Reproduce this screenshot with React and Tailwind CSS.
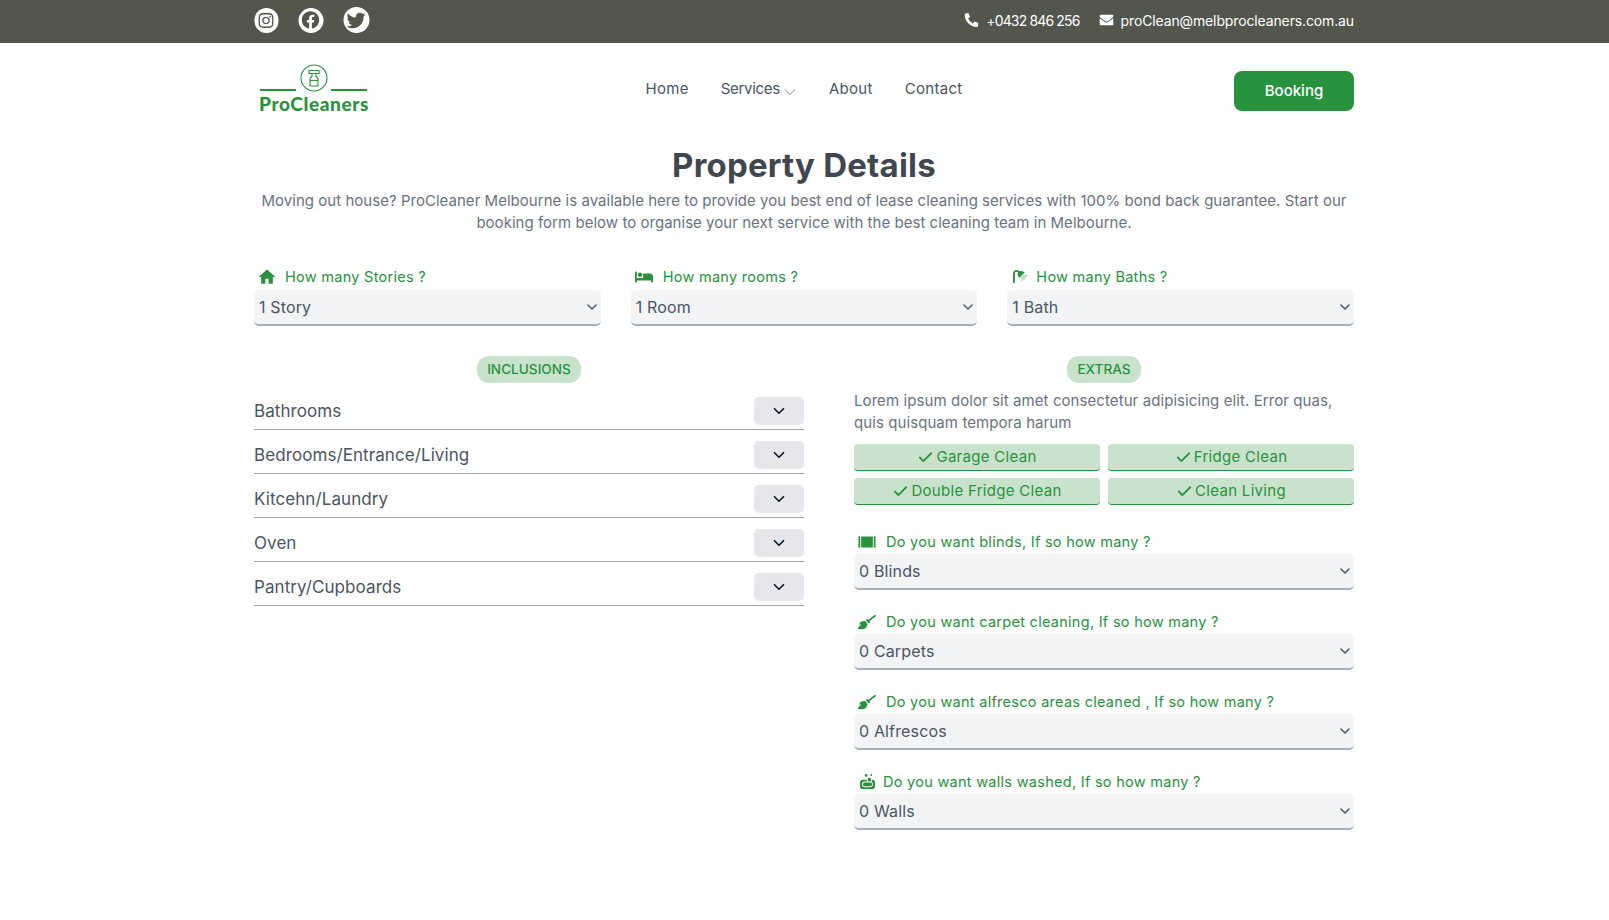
import { Check, ChevronDown } from 'lucide-react';
import {
  FaBed,
  FaBroom,
  FaEnvelope,
  FaFacebook,
  FaInstagram,
  FaPhoneAlt,
  FaShower,
  FaSoap,
  FaTwitter,
} from 'react-icons/fa';
import { FaRug } from 'react-icons/fa6';
import { MdHome } from 'react-icons/md';

const font = "font-['Inter','Noto_Sans',sans-serif]";

const propertyFields = [
  { Icon: MdHome, label: 'How many Stories ?', value: '1 Story', iconClass: 'w-[20px] h-[20px]', gap: 'gap-[10px]', selectGap: 'mt-[4px]' },
  { Icon: FaBed, label: 'How many rooms ?', value: '1 Room', iconClass: 'w-[18px] h-[18px]', gap: 'gap-[11px]', selectGap: 'mt-[4px]' },
  { Icon: FaShower, label: 'How many Baths ?', value: '1 Bath', iconClass: 'w-[15px] h-[15px]', gap: 'gap-[8px]', selectGap: 'mt-[4px]' },
];

const inclusions = ['Bathrooms', 'Bedrooms/Entrance/Living', 'Kitcehn/Laundry', 'Oven', 'Pantry/Cupboards'];

const chips = ['Garage Clean', 'Fridge Clean', 'Double Fridge Clean', 'Clean Living'];

const extraFields = [
  { Icon: FaRug, label: 'Do you want blinds, If so how many ?', value: '0 Blinds', iconClass: 'w-[18px] h-[18px]', gap: 'gap-[11px]' },
  { Icon: FaBroom, label: 'Do you want carpet cleaning, If so how many ?', value: '0 Carpets', iconClass: 'w-[18px] h-[18px]', gap: 'gap-[11px]' },
  { Icon: FaBroom, label: 'Do you want alfresco areas cleaned , If so how many ?', value: '0 Alfrescos', iconClass: 'w-[18px] h-[18px]', gap: 'gap-[11px]' },
  { Icon: FaSoap, label: 'Do you want walls washed, If so how many ?', value: '0 Walls', iconClass: 'w-[15px] h-[15px]', gap: 'gap-[8px]' },
];

function SelectField({ Icon, label, value, iconClass, gap, selectGap = 'mt-[3px]' }) {
  return (
    <div>
      <label className={`flex h-[19px] items-center pl-[5px] ${gap} text-[14.5px] leading-[19px] tracking-[0.28px] text-[#28923e]`}>
        <span className="flex w-[16px] justify-center">
          <Icon className={`shrink-0 ${iconClass}`} />
        </span>
        {label}
      </label>
      <div className={`relative ${selectGap}`}>
        <select
          defaultValue={value}
          className="h-[36px] w-full appearance-none rounded-[5px] border-b-2 border-[#a8aeb6] bg-[#f3f4f6] pl-[5px] text-[16px] tracking-[0.15px] text-[#4b5563] outline-none"
        >
          <option>{value}</option>
        </select>
        <ChevronDown strokeWidth={2.25} className="pointer-events-none absolute right-[1px] top-[9px] h-[16px] w-[16px] text-[#4b5563]" />
      </div>
    </div>
  );
}

export default function App() {
  return (
    <div className={`min-h-[920px] bg-white pr-[1px] ${font}`}>
      {/* Top bar */}
      <div className="-mr-[1px] h-[43px] bg-[#52564d]">
        <div className="mx-auto flex h-full w-[1100px] -translate-x-[0.5px] items-center justify-between">
          <div className="flex items-center gap-[20px] pb-[3px]">
            <span className="flex h-[25px] w-[24px] items-center justify-center rounded-full bg-white text-[#52564d]">
              <FaInstagram className="h-[17px] w-[17px]" />
            </span>
            <span className="flex h-[25px] w-[25px] items-center justify-center rounded-full bg-white text-[#52564d]">
              <FaFacebook className="h-[18px] w-[18px]" />
            </span>
            <span className="flex h-[26px] w-[26px] items-center justify-center rounded-full bg-white text-[#52564d]">
              <FaTwitter className="h-[19px] w-[19px]" />
            </span>
          </div>
          <div className="flex items-center pb-[3px] text-[14px] text-white">
            <FaPhoneAlt className="h-[14px] w-[14px]" />
            <span className="ml-[8px] tracking-[-0.85px]">+0432 846 256</span>
            <FaEnvelope className="ml-[20px] h-[14px] w-[14px]" />
            <span className="ml-[7px] tracking-[-0.13px]">proClean@melbprocleaners.com.au</span>
          </div>
        </div>
      </div>

      <div className="mx-auto w-[1100px]">
        {/* Nav */}
        <nav className="flex h-[96px] items-center justify-between">
          <div className="mb-[5px] ml-[6px] w-[107px]">
            <div className="flex items-end justify-between">
              <span className="mb-[1px] h-[2px] w-[36px] bg-[#28923e]" />
              <svg viewBox="0 0 28 28" className="h-[28px] w-[28px]" fill="none" stroke="#28923e" strokeWidth="1.1">
                <circle cx="14" cy="14" r="13" />
                <path d="M9 6.5h10v3h-10zM12 9.5v3l-2 2v7.5h8v-7.5l-2-2v-3M10 16.5h8" />
              </svg>
              <span className="mb-[1px] h-[2px] w-[36px] bg-[#28923e]" />
            </div>
            <div className="-ml-[1px] mt-[2px] whitespace-nowrap font-['Lato'] text-[19px] font-black leading-[20px] tracking-[0.6px] text-[#28923e]">ProCleaners</div>
          </div>
          <div className="mb-[4px] ml-[7px] flex items-center gap-[32px] text-[15px] tracking-[0.3px] text-[#4b5563]">
            <a>Home</a>
            <a className="flex items-center tracking-[-0.3px]">
              Services
              <ChevronDown strokeWidth={1.25} className="-my-[4px] -mr-[3px] mt-[2px] h-[20px] w-[20px] text-[#9ca3af]" />
            </a>
            <a>About</a>
            <a>Contact</a>
          </div>
          <button className="h-[40px] w-[120px] rounded-[8px] bg-[#28923e] text-[15px] font-medium text-white">Booking</button>
        </nav>

        {/* Heading */}
        <h1 className="mt-[4px] text-center text-[33px] font-bold leading-[44px] tracking-[0.2px] text-[#414750]">Property Details</h1>
        <p className="mt-[3px] whitespace-nowrap text-center text-[15px] leading-[22px] tracking-[0.03px] text-[#6b7280]">
          Moving out house? ProCleaner Melbourne is available here to provide you best end of lease cleaning services with 100% bond back guarantee. Start our
          <br />
          booking form below to organise your next service with the best cleaning team in Melbourne.
        </p>

        {/* Property selects */}
        <div className="mt-[33px] grid grid-cols-3 gap-[30px]">
          {propertyFields.map((field) => (
            <SelectField key={field.label} {...field} />
          ))}
        </div>

        <div className="mt-[30px] grid grid-cols-[550px_500px] gap-[50px]">
          {/* Inclusions */}
          <div>
            <div className="flex justify-center">
              <span className="flex h-[27px] items-center rounded-[12px] bg-[#c8e2cc] px-[10px] text-[13.6px] font-medium text-[#28923e]">INCLUSIONS</span>
            </div>
            <div className="mt-[3px]">
              {inclusions.map((item) => (
                <div key={item} className="flex h-[44px] items-center justify-between border-b border-[#a3a3a3] pb-[4px] pt-[11px] text-[17px] tracking-[0.08px] text-[#4b5563]">
                  <span className="mt-[1px]">{item}</span>
                  <button className="flex h-[28px] w-[50px] items-center justify-center rounded-[5px] bg-[#e7e7eb] text-[#111827]">
                    <ChevronDown strokeWidth={2.25} className="h-[18px] w-[18px]" />
                  </button>
                </div>
              ))}
            </div>
          </div>

          {/* Extras */}
          <div>
            <div className="flex justify-center">
              <span className="flex h-[27px] items-center rounded-[12px] bg-[#c8e2cc] px-[10px] text-[13.6px] font-medium text-[#28923e]">EXTRAS</span>
            </div>
            <p className="mt-[7px] whitespace-nowrap text-[15px] leading-[22px] tracking-[0.08px] text-[#6b7280]">
              Lorem ipsum dolor sit amet consectetur adipisicing elit. Error quas,
              <br />
              quis quisquam tempora harum
            </p>
            <div className="mt-[10px] grid grid-cols-2 gap-x-[8px] gap-y-[7px]">
              {chips.map((chip) => (
                <div key={chip} className="flex h-[27px] items-center justify-center gap-[2px] rounded-[4px] border-b border-[#28923e] bg-[#c8e2cc] text-[15px] tracking-[0.3px] text-[#28923e]">
                  <Check strokeWidth={2.5} className="h-[17px] w-[17px]" />
                  {chip}
                </div>
              ))}
            </div>
            <div className="mt-[27px] grid gap-[22px]">
              {extraFields.map((field) => (
                <SelectField key={field.label} {...field} />
              ))}
            </div>
          </div>
        </div>
      </div>
    </div>
  );
}
